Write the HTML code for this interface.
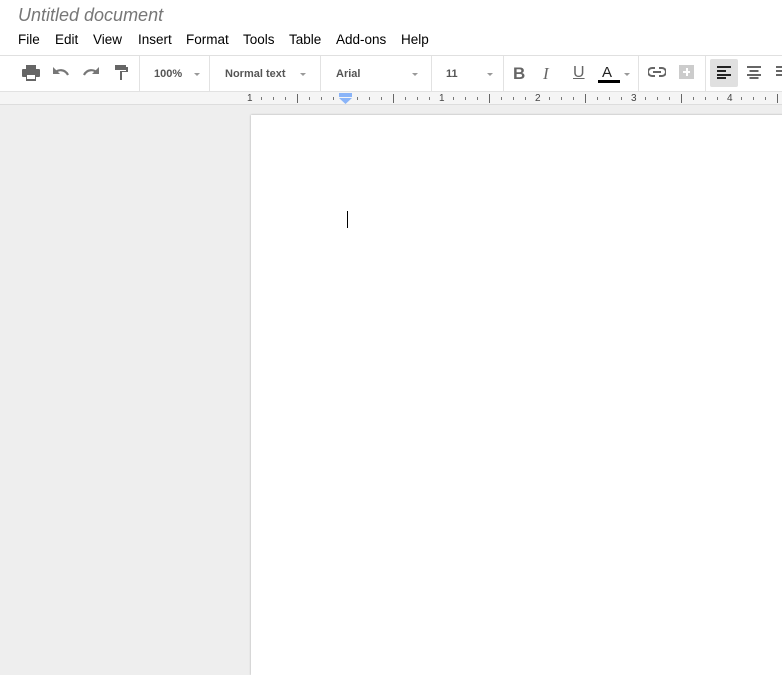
<!DOCTYPE html>
<html><head><style>
*{margin:0;padding:0;box-sizing:border-box}
body{width:782px;height:652px;overflow:hidden;background:#eee;font-family:"Liberation Sans",Arial,sans-serif;position:relative}
.a{position:absolute}
.top{left:0;top:0;width:782px;height:56px;background:#fff;border-bottom:1px solid #e0e0e0}
.title{left:18px;top:5px;font-size:18px;font-style:italic;color:#777}
.menu{top:32px;font-size:13.5px;color:#000}
.tb{left:0;top:56px;width:782px;height:36px;background:#fff;border-bottom:1px solid #e2e2e2}
.sep{top:56px;width:1px;height:35px;background:#e2e2e2}
.t{font-size:11px;font-weight:bold;color:#555;top:68px}
.dd{width:0;height:0;border-left:3px solid transparent;border-right:3px solid transparent;border-top:3px solid #999;top:73px}
.ruler{left:0;top:92px;width:782px;height:13px;background:#f5f5f5;border-bottom:1px solid #ddd}
.rk{width:1px;height:3px;background:#777;top:97px}
.rl{width:1px;height:9px;background:#666;top:94px}
.rn{font-size:10px;color:#444;top:93px}
.page{left:251px;top:115px;width:540px;height:560px;background:#fff;box-shadow:0 0 2px rgba(0,0,0,.3)}
</style></head><body>
<div class="a top"></div>
<div class="a title">Untitled document</div>
<div class="a menu" style="left:18px">File</div>
<div class="a menu" style="left:55px">Edit</div>
<div class="a menu" style="left:93px">View</div>
<div class="a menu" style="left:138px">Insert</div>
<div class="a menu" style="left:186px">Format</div>
<div class="a menu" style="left:243px">Tools</div>
<div class="a menu" style="left:289px">Table</div>
<div class="a menu" style="left:336px">Add-ons</div>
<div class="a menu" style="left:401px">Help</div>
<div class="a tb"></div>
<div class="a sep" style="left:139px"></div>
<div class="a sep" style="left:209px"></div>
<div class="a sep" style="left:320px"></div>
<div class="a sep" style="left:431px"></div>
<div class="a sep" style="left:503px"></div>
<div class="a sep" style="left:638px"></div>
<div class="a sep" style="left:705px"></div>
<svg class="a" style="left:22px;top:65px" width="18" height="16" viewBox="0 0 18 16"><rect x="4" y="0" width="10" height="4" fill="#666"/><rect x="0" y="4" width="18" height="8" rx="1" fill="#666"/><rect x="4" y="9" width="10" height="7" fill="#666"/><rect x="5" y="10" width="8" height="4" fill="#fff"/></svg>
<svg class="a" style="left:52px;top:66px" width="18" height="12" viewBox="0 0 18 12"><path d="M3 7c3-4 10-4 13 2" stroke="#777" stroke-width="2.2" fill="none"/><path d="M1 1v7h7z" fill="#777"/></svg>
<svg class="a" style="left:82px;top:66px" width="18" height="12" viewBox="0 0 18 12"><path d="M15 7c-3-4-10-4-13 2" stroke="#777" stroke-width="2.2" fill="none"/><path d="M17 1v7h-7z" fill="#777"/></svg>
<svg class="a" style="left:115px;top:65px" width="14" height="15" viewBox="0 0 14 15"><rect x="0" y="0" width="11" height="5" fill="#666"/><path d="M11 2h2v5H7v8H5V6h6z" fill="#666"/></svg>
<div class="a t" style="left:154px">100%</div><div class="a dd" style="left:194px"></div>
<div class="a t" style="left:225px">Normal text</div><div class="a dd" style="left:300px"></div>
<div class="a t" style="left:336px">Arial</div><div class="a dd" style="left:412px"></div>
<div class="a t" style="left:446px">11</div><div class="a dd" style="left:487px"></div>
<div class="a" style="left:513px;top:64px;font-size:17px;font-weight:bold;color:#666">B</div>
<div class="a" style="left:543px;top:64px;font-size:17px;font-style:italic;color:#666;font-family:'Liberation Serif',serif">I</div>
<div class="a" style="left:573px;top:64px;font-size:16px;color:#666;text-decoration:underline">U</div>
<div class="a" style="left:602px;top:64px;font-size:15px;color:#222">A</div>
<div class="a" style="left:598px;top:80px;width:22px;height:3px;background:#000"></div>
<div class="a dd" style="left:624px"></div>
<svg class="a" style="left:648px;top:67px" width="18" height="10" viewBox="0 0 18 10"><path d="M7 1H4a4 4 0 000 8h3M11 1h3a4 4 0 010 8h-3M5 5h8" stroke="#666" stroke-width="2" fill="none"/></svg>
<div class="a" style="left:679px;top:65px;width:15px;height:14px;background:#ccc"></div>
<div class="a" style="left:683px;top:71px;width:7px;height:2px;background:#fff"></div><div class="a" style="left:686px;top:68px;width:2px;height:8px;background:#fff"></div>
<div class="a" style="left:710px;top:59px;width:28px;height:28px;background:#e0e0e0;border-radius:2px"></div>
<svg class="a" style="left:717px;top:66px" width="14" height="13"><g fill="#222"><rect y="0" width="14" height="2"/><rect y="4" width="9" height="2"/><rect y="8" width="14" height="2"/><rect y="11" width="9" height="2"/></g></svg>
<svg class="a" style="left:747px;top:66px" width="14" height="13"><g fill="#666"><rect y="0" width="14" height="2"/><rect x="2.5" y="4" width="9" height="2"/><rect y="8" width="14" height="2"/><rect x="2.5" y="11" width="9" height="2"/></g></svg>
<svg class="a" style="left:776px;top:66px" width="6" height="13"><g fill="#666"><rect y="0" width="14" height="2"/><rect y="4" width="9" height="2"/><rect y="8" width="14" height="2"/></g></svg>
<div class="a ruler"></div>
<div id="r"></div>
<div class="a page"></div>
<div class="a" style="left:347px;top:211px;width:1px;height:17px;background:#000"></div>
<svg class="a" style="left:339px;top:93px" width="13" height="12"><rect x="0" y="0" width="13" height="4" fill="#8ab4f8"/><path d="M0 5h13l-6.5 6z" fill="#8ab4f8"/></svg>
<script>
var h='',x;
for(var i=0;i<46;i++){x=249+i*12;if(i%8==0){var n=(i-8)/8;if(n!=0)h+='<div class="a rn" style="left:'+(x-2)+'px">'+(n<0?1:n)+'</div>';}else if(i%4==0){h+='<div class="a rl" style="left:'+x+'px"></div>';}else if(x<339||x>352){h+='<div class="a rk" style="left:'+x+'px"></div>';}}
document.getElementById('r').innerHTML=h;
</script>
</body></html>
